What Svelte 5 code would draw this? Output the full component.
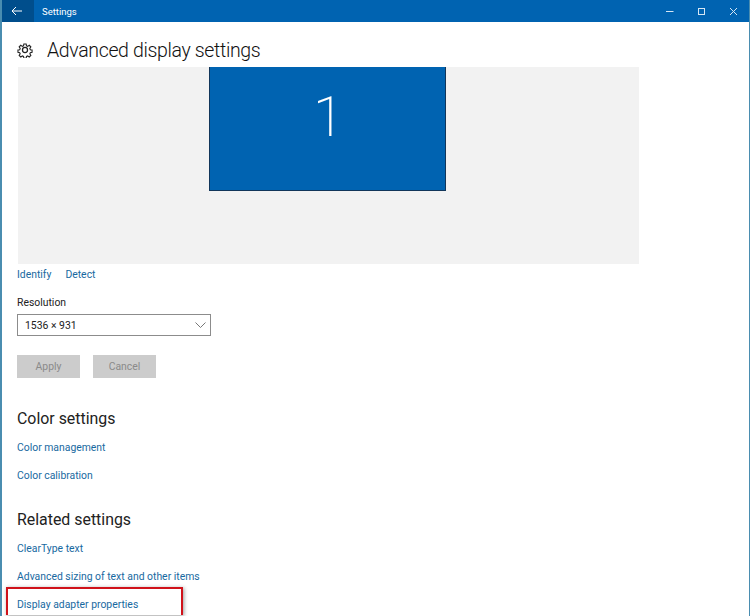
<script>
	const colorLinks = ["Color management", "Color calibration"];
	const relatedLinks = ["ClearType text", "Advanced sizing of text and other items"];
</script>

<div class="window">
	<header class="titlebar">
		<button class="back" aria-label="Back">
			<svg width="12" height="10" viewBox="0 0 12 10" fill="none" stroke="#fff" stroke-width="1">
				<path d="M11 5H1M5 1L1 5l4 4" />
			</svg>
		</button>
		<span class="apptitle">Settings</span>
		<div class="controls">
			<svg width="9" height="9" viewBox="0 0 9 9" stroke="#d5e6f4" fill="none"><path d="M1 4.5h7.5" /></svg>
			<svg width="9" height="9" viewBox="0 0 9 9" stroke="#d5e6f4" fill="none"><rect x="1.5" y="1.5" width="6" height="6" /></svg>
			<svg width="9" height="9" viewBox="0 0 9 9" stroke="#d5e6f4" fill="none"><path d="M1 1l7 7M8 1L1 8" /></svg>
		</div>
	</header>

	<main>
		<div class="pagehead">
			<svg class="gear" width="16" height="16" viewBox="0 0 24 24" fill="none" stroke="#222" stroke-width="1.9">
				<circle cx="12" cy="12" r="3.8" />
				<path d="M10 1.5h4l.6 3.2 2 .9 2.8-1.8 2.8 2.8-1.8 2.8.9 2 3 .6v4l-3 .6-.9 2 1.8 2.8-2.8 2.8-2.8-1.8-2 .9-.6 3h-4l-.6-3-2-.9-2.8 1.8-2.8-2.8 1.8-2.8-.9-2-3-.6v-4l3-.6.9-2-1.8-2.8 2.8-2.8 2.8 1.8 2-.9z" transform="translate(1.7 1.7) scale(.86)" />
			</svg>
			<h1>Advanced display settings</h1>
		</div>

		<div class="preview">
			<div class="monitor">1</div>
		</div>

		<div class="links">
			<a href="#identify">Identify</a>
			<a href="#detect">Detect</a>
		</div>

		<label class="fieldlabel" for="res">Resolution</label>
		<div class="select" id="res">
			<span>1536 × 931</span>
			<svg width="11" height="6" viewBox="0 0 11 6" fill="none" stroke="#777"><path d="M.5.5l5 5 5-5" /></svg>
		</div>

		<div class="buttons">
			<button class="btn">Apply</button>
			<button class="btn">Cancel</button>
		</div>

		<h2>Color settings</h2>
		{#each colorLinks as link}
			<a class="item" href="#color">{link}</a>
		{/each}

		<h2 class="related">Related settings</h2>
		{#each relatedLinks as link}
			<a class="item" href="#related">{link}</a>
		{/each}
		<div class="highlight">
			<a class="item" href="#adapter">Display adapter properties</a>
		</div>
	</main>
</div>

<style>
	:global(body) {
		margin: 0;
		background: #fff;
	}

	.window {
		width: 750px;
		height: 616px;
		box-sizing: border-box;
		border-left: 2px solid #4a8db0;
		border-right: 1px solid #4a8db0;
		overflow: hidden;
		font-family: Roboto, "Open Sans", sans-serif;
		color: #222;
	}

	.titlebar {
		height: 22px;
		margin-left: -2px;
		margin-right: -1px;
		background: #0063b1;
		display: flex;
		align-items: center;
		color: #fff;
	}

	.back {
		width: 34px;
		height: 22px;
		padding: 0;
		border: 0;
		background: #004e8c;
		display: flex;
		align-items: center;
		justify-content: center;
	}

	.apptitle {
		font-size: 9.5px;
		margin-left: 8px;
	}

	.controls {
		margin-left: auto;
		display: flex;
		gap: 23px;
		margin-right: 12px;
	}

	main {
		padding-left: 16px;
	}

	.pagehead {
		display: flex;
		align-items: center;
		height: 45px;
		padding-top: 11px;
		box-sizing: border-box;
	}

	.gear {
		margin: 0 14px 0 -1px;
	}

	h1 {
		margin: 0;
		font-size: 19.5px;
		font-weight: 300;
		letter-spacing: -0.35px;
		color: #111;
		white-space: nowrap;
	}

	.preview {
		width: 621px;
		height: 197px;
		background: #f2f2f2;
		box-sizing: border-box;
	}

	.monitor {
		margin-left: 191px;
		width: 237px;
		height: 124px;
		box-sizing: border-box;
		background: #0063b1;
		border: 1px solid #12365a;
		border-top: 0;
		padding-left: 2px;
		color: #fff;
		font-family: Roboto, sans-serif;
		font-weight: 200;
		font-size: 56px;
		line-height: 100px;
		text-align: center;
	}

	.links {
		display: flex;
		gap: 14px;
		margin: 2px 0 0 -1px;
		height: 16px;
		align-items: center;
	}

	a {
		color: #18699f;
		text-decoration: none;
		font-size: 10.4px;
		white-space: nowrap;
	}

	.fieldlabel {
		display: block;
		font-size: 10.4px;
		line-height: 16px;
		margin: 13px 0 0 -1px;
	}

	.select {
		width: 194px;
		height: 22px;
		margin: 3px 0 0 -1px;
		box-sizing: border-box;
		border: 1.5px solid #8c8c8c;
		padding: 0 4px 0 7px;
		display: flex;
		align-items: center;
		justify-content: space-between;
		font-size: 10.4px;
	}

	.buttons {
		display: flex;
		gap: 13px;
		margin: 19px 0 0 -1px;
	}

	.btn {
		width: 63px;
		height: 23px;
		padding: 0;
		border: 0;
		background: #ccc;
		color: #8a8a8a;
		font-family: inherit;
		font-size: 10.4px;
	}

	h2 {
		margin: 30px 0 0 -1px;
		font-size: 15.9px;
		line-height: 22px;
		font-weight: 400;
		color: #222;
	}

	h2.related {
		margin-top: 25px;
	}

	.item {
		display: block;
		line-height: 16px;
		margin: 12px 0 0 -1px;
	}

	h2 + .item {
		margin-top: 10px;
	}

	.highlight {
		margin: 2px 0 0 -12px;
		width: 177px;
		height: 28px;
		box-sizing: border-box;
		border: 2px solid #d0121a;
		border-bottom: 0;
		padding-left: 10px;
		box-shadow: 1px 1px 4px rgba(0, 0, 0, 0.4);
	}

	.highlight .item {
		margin-top: 8px;
	}
</style>
